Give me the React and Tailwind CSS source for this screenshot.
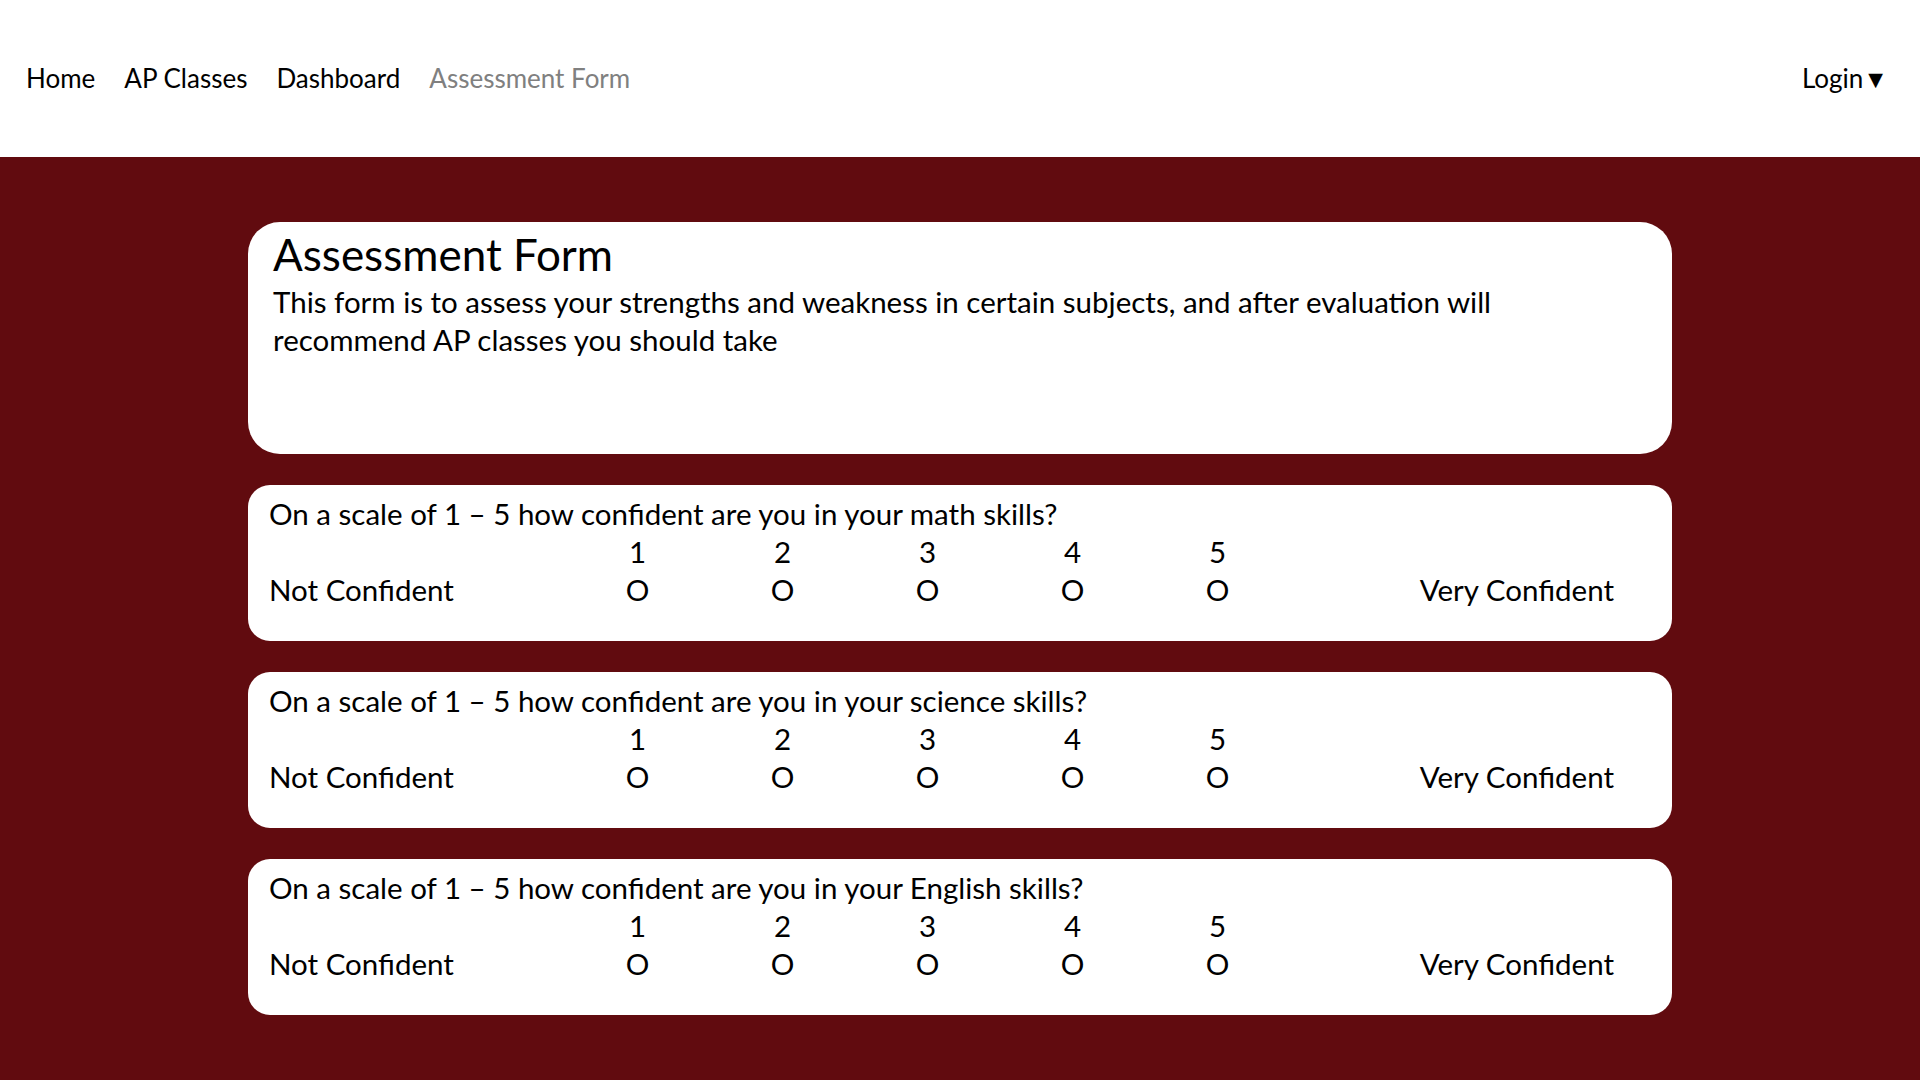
import { useState } from 'react';

const subjects = ['math', 'science', 'English'];

function Question({ subject }) {
    return (
        <div className="h-[156px] bg-white rounded-[22px] pl-[21px] pr-[58px] pt-[10px]">
            <p className="leading-[38px]">On a scale of 1 – 5 how confident are you in your {subject} skills?</p>
            <div className="grid grid-cols-[296px_repeat(5,145px)_1fr] leading-[38px]">
                <span></span>
                {[1, 2, 3, 4, 5].map(n => (
                    <span key={n} className="text-center">{n}</span>
                ))}
                <span></span>
                <span>Not Confident</span>
                {[1, 2, 3, 4, 5].map(n => (
                    <span key={n} className="text-center">O</span>
                ))}
                <span className="text-right">Very Confident</span>
            </div>
        </div>
    );
}

export default function App() {
    const [active] = useState('Assessment Form');
    const links = ['Home', 'AP Classes', 'Dashboard', 'Assessment Form'];

    return (
        <div className="min-h-screen bg-[#610b0f] font-['Lato',sans-serif] text-black">
            {/* навигация */}
            <nav className="h-[157px] bg-white flex items-center justify-between pl-[26px] pr-[32px] text-[26px]">
                <div className="flex gap-[29px]">
                    {links.map(l => (
                        <a key={l} href="#" className={l === active ? 'text-[#808080]' : 'text-black'}>{l}</a>
                    ))}
                </div>
                <a href="#" className="text-black">Login<span className="text-[25px]">▼</span></a>
            </nav>

            <main className="w-[1424px] mx-auto pt-[65px] pb-[65px] flex flex-col gap-[31px] text-[29.5px]">
                <div className="h-[232px] bg-white rounded-[32px] pl-[25px] pr-[40px] pt-[6px]">
                    <h1 className="text-[44px] leading-[52px]">Assessment Form</h1>
                    <p className="mt-[3px] leading-[38px] max-w-[1300px]">
                        This form is to assess your strengths and weakness in certain subjects, and after evaluation will recommend AP classes you should take
                    </p>
                </div>
                {subjects.map(s => (
                    <Question key={s} subject={s} />
                ))}
            </main>
        </div>
    );
}
